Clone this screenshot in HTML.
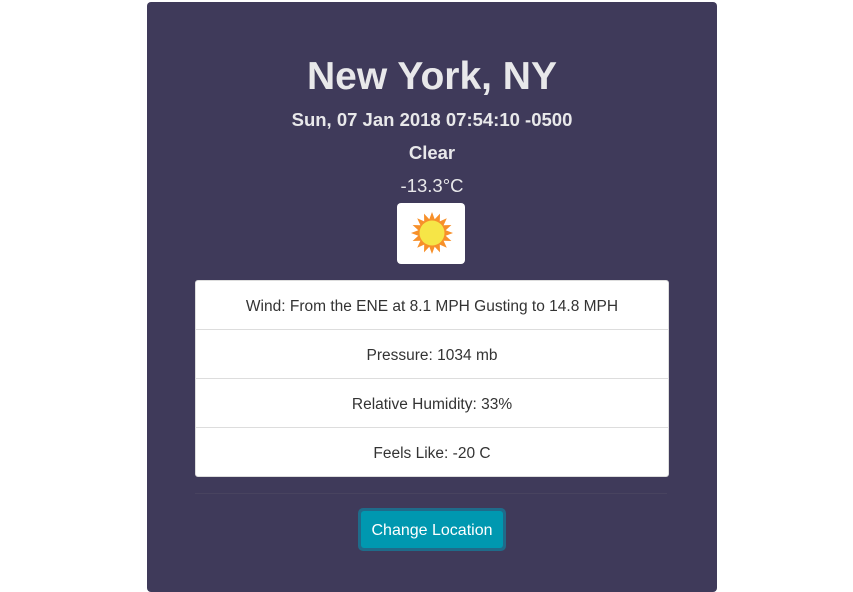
<!DOCTYPE html>
<html><head><meta charset="utf-8"><style>
body{margin:0;width:853px;height:578px;background:#fff;overflow:hidden;font-family:"Liberation Sans",sans-serif;position:relative}
.card{position:absolute;left:147px;top:2px;width:570px;height:590px;background:#3f3a5a;border-radius:4px}
.t{position:absolute;left:0;width:100%;text-align:center;color:#e8e8ea;font-weight:bold}
.list{position:absolute;left:48px;top:278px;width:472px;background:#fff;border:1px solid #ddd;border-radius:3px}
.list div{height:48px;line-height:52px;text-align:center;font-size:15.5px;color:#333;border-top:1px solid #ddd}
.list div:first-child{border-top:none}
.btn{position:absolute;left:211px;top:506px;width:148px;height:43px;border-radius:5px;background:#1f6b8a;}
.btn span{position:absolute;left:3px;top:3px;right:3px;bottom:3px;background:#0098b0;border-radius:3px;color:#fff;font-size:16px;line-height:39px;text-align:center}
</style></head><body>
<div class="card">
<div class="t" style="top:52px;font-size:39px;line-height:46px">New York, NY</div>
<div class="t" style="top:106px;font-size:18.5px;line-height:24px">Sun, 07 Jan 2018 07:54:10 -0500</div>
<div class="t" style="top:139px;font-size:18.5px;line-height:24px">Clear</div>
<div class="t" style="top:172px;font-size:18.5px;line-height:24px;font-weight:normal">-13.3°C</div>
<div style="position:absolute;left:250px;top:201px;width:68px;height:61px;background:#fff;border-radius:4px">
<svg width="68" height="61" viewBox="0 0 68 61">
<g transform="translate(35,30)">
<polygon fill="#f7902a" points="21,0 13.7,2.7 19.4,8 11.6,7.8 14.8,14.8 7.8,11.6 8,19.4 2.7,13.7 0,21 -2.7,13.7 -8,19.4 -7.8,11.6 -14.8,14.8 -11.6,7.8 -19.4,8 -13.7,2.7 -21,0 -13.7,-2.7 -19.4,-8 -11.6,-7.8 -14.8,-14.8 -7.8,-11.6 -8,-19.4 -2.7,-13.7 0,-21 2.7,-13.7 8,-19.4 7.8,-11.6 14.8,-14.8 11.6,-7.8 19.4,-8 13.7,-2.7"/>
<circle r="12.5" fill="#f6e547"/>
</g></svg></div>
<div class="list">
<div>Wind: From the ENE at 8.1 MPH Gusting to 14.8 MPH</div>
<div>Pressure: 1034 mb</div>
<div>Relative Humidity: 33%</div>
<div>Feels Like: -20 C</div>
</div>
<div style="position:absolute;left:48px;top:491px;width:472px;height:1px;background:#48435f"></div>
<div class="btn"><span>Change Location</span></div>
</div>
</body></html>
